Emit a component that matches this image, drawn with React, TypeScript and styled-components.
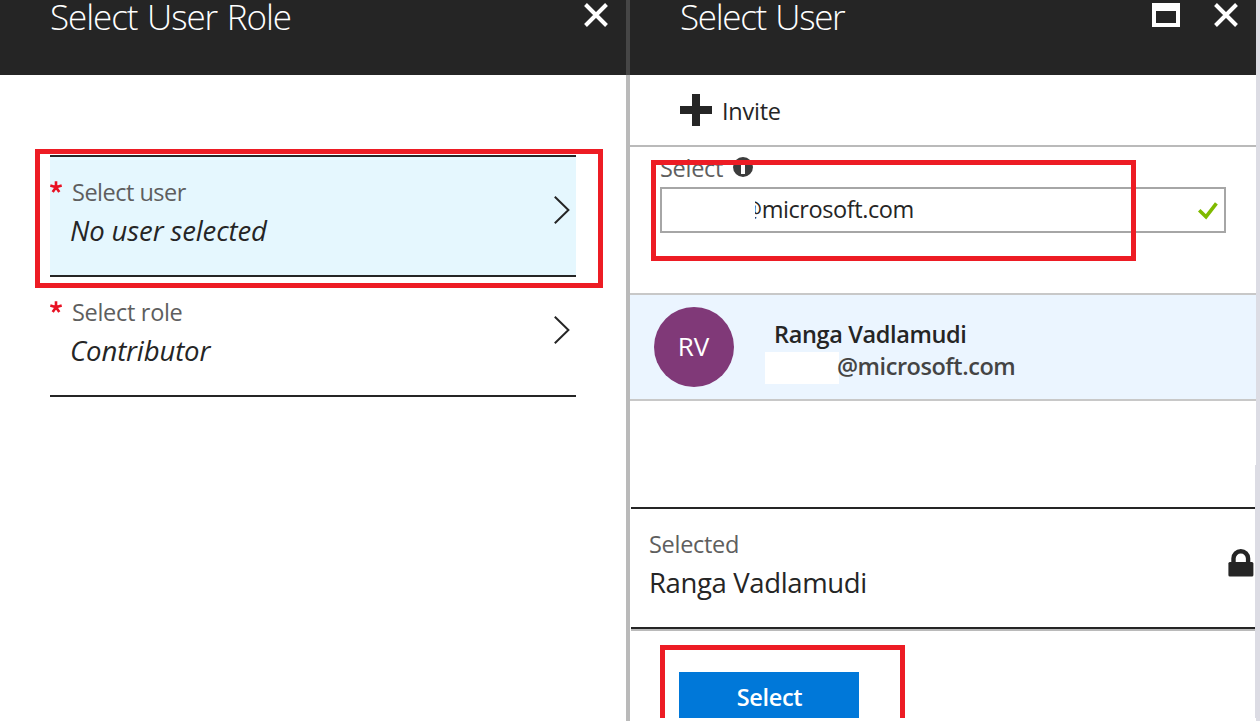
import React from 'react';
import styled, { createGlobalStyle } from 'styled-components';

const INK = '#252525';
const MARK = '#ed1c24';

const GlobalStyle = createGlobalStyle`
  * { box-sizing: border-box; }
  body {
    margin: 0;
    background: #fff;
    color: ${INK};
    font-family: "Open Sans", "Noto Sans", sans-serif;
  }
`;

const Page = styled.div`
  position: relative;
  display: flex;
  width: 1260px;
  height: 721px;
  overflow: hidden;
  background: #fff;
`;

const Blade = styled.section`
  display: flex;
  flex-direction: column;
  width: 626px;
  height: 718px;
  overflow: hidden;
`;

const Divider = styled.div`
  width: 4px;
  background: linear-gradient(#464646 75px, #bababa 75px);
`;

const Gutter = styled.div`
  width: 4px;
  background: #dcdce4;
`;

const Header = styled.header`
  display: flex;
  flex: none;
  height: 75px;
  padding-left: 50px;
  background: ${INK};
`;

const Title = styled.h1<{ $spacing: number }>`
  flex: 1;
  margin: 0;
  color: #fff;
  font-size: 35px;
  font-weight: 300;
  line-height: 33px;
  letter-spacing: ${p => p.$spacing}px;
  word-spacing: 1.5px;
  white-space: nowrap;
`;

const HeaderActions = styled.div`
  display: flex;
  align-items: flex-start;
  gap: 34px;
  padding: 3px 18px 0 0;
`;

const Icon = styled.svg`
  display: block;
  flex: none;
`;

const FieldList = styled.div`
  margin: 80px 50px 0;
  border-top: 2px solid ${INK};
`;

const Field = styled.div<{ $active?: boolean }>`
  display: flex;
  align-items: flex-start;
  height: 120px;
  padding-top: 19px;
  border-bottom: 2px solid ${INK};
  background: ${p => (p.$active ? '#e5f7fe' : 'transparent')};
`;

const Required = styled.div`
  width: 20px;
  padding-top: 5px;
`;

const FieldText = styled.div`
  flex: 1;
`;

const ChevronSlot = styled.div`
  padding: 20px 5px 0 0;
`;

const Label = styled.div<{ $indent?: number; $spacing?: number }>`
  padding-left: ${p => p.$indent ?? 0}px;
  color: #5e5e5e;
  font-size: 23.5px;
  line-height: 32px;
  letter-spacing: ${p => p.$spacing ?? -0.29}px;
  white-space: nowrap;
`;

const Value = styled.div<{ $italic?: boolean }>`
  margin-top: 4px;
  padding-left: ${p => (p.$italic ? 0 : 1)}px;
  font-size: 27.5px;
  font-style: ${p => (p.$italic ? 'italic' : 'normal')};
  line-height: 38px;
  letter-spacing: ${p => (p.$italic ? -0.12 : -0.36)}px;
  white-space: nowrap;
`;

const Toolbar = styled.div`
  display: flex;
  flex: none;
  align-items: center;
  gap: 10px;
  height: 72px;
  padding-left: 50px;
  border-bottom: 2px solid #bababa;
`;

const ToolbarLabel = styled.span`
  padding-top: 2px;
  font-size: 23.5px;
  line-height: 32px;
  letter-spacing: -0.25px;
`;

const Search = styled.div`
  flex: none;
  height: 146px;
  padding: 5px 30px 0;
`;

const SearchLabel = styled.div`
  display: flex;
  align-items: flex-start;
  gap: 10px;
  height: 35px;
`;

const InfoSlot = styled.div`
  padding-top: 5px;
`;

const Input = styled.div`
  display: flex;
  justify-content: space-between;
  height: 46px;
  padding: 4px 6px 0 93px;
  border: 2px solid #a6a6a6;
`;

const ClippedText = styled.div`
  overflow: hidden;
  height: 34px;
  font-size: 23.5px;
  line-height: 32px;
  letter-spacing: -0.42px;
  text-indent: -14px;
`;

const CheckSlot = styled.div`
  padding-top: 9px;
`;

const UserRow = styled.div`
  display: flex;
  flex: none;
  height: 108px;
  padding-left: 24px;
  border: solid #c8c8c8;
  border-width: 2px 0;
  background: #ebf5ff;
`;

const Avatar = styled.div`
  width: 80px;
  height: 80px;
  margin: 12px 40px 0 0;
  padding-right: 1px;
  border-radius: 50%;
  background: #803978;
  color: #fff;
  font-size: 26px;
  line-height: 78px;
  text-align: center;
`;

const UserText = styled.div`
  padding-top: 23px;
  font-size: 23.5px;
  font-weight: 600;
  line-height: 32px;
  white-space: nowrap;
`;

const UserName = styled.div`
  letter-spacing: -0.36px;
`;

const UserMail = styled.div`
  display: flex;
  color: #444;
  letter-spacing: -0.46px;
`;

const Redaction = styled.span`
  width: 74px;
  height: 32px;
  margin: 2px -2px 0 -9px;
  background: #fff;
`;

const Lower = styled.div`
  display: flex;
  flex-direction: column;
  flex: 1;
  margin-top: 64px;
  padding-left: 1px;
  border-right: 1px solid #dcdce4;
`;

const Selected = styled.div`
  display: flex;
  align-items: flex-start;
  justify-content: space-between;
  height: 124px;
  margin-top: 42px;
  padding: 19px 1px 0 17px;
  border-top: 2px solid ${INK};
  border-bottom: 2px solid #bababa;
  box-shadow: inset 0 -2px ${INK};
`;

const LockSlot = styled.div`
  padding-top: 21px;
`;

const Footer = styled.div`
  padding: 41px 0 0 48px;
`;

const SelectButton = styled.button`
  display: flex;
  align-items: flex-start;
  justify-content: center;
  width: 180px;
  height: 60px;
  padding: 9px 0 0 1px;
  border: 0;
  background: #0078d9;
  color: #fff;
  font: 600 23.5px/32px "Open Sans", "Noto Sans", sans-serif;
  letter-spacing: -0.3px;
`;

const Highlight = styled.div<{ $x: number; $y: number; $w: number; $h: number; $open?: boolean }>`
  position: absolute;
  left: ${p => p.$x}px;
  top: ${p => p.$y}px;
  width: ${p => p.$w}px;
  height: ${p => p.$h}px;
  border: 5px solid ${MARK};
  border-bottom-width: ${p => (p.$open ? 0 : 5)}px;
  pointer-events: none;
`;

const CloseIcon = () => (
  <Icon width="24" height="24" viewBox="0 0 24 24" fill="none" stroke="#fff" strokeWidth="4">
    <path d="M1.5 1.5l21 21M22.5 1.5l-21 21" />
  </Icon>
);

const MaximizeIcon = () => (
  <Icon width="28" height="24" viewBox="0 0 28 24">
    <path fill="#fff" fillRule="evenodd" d="M0 0h28v24H0zM4 8v12h20V8z" />
  </Icon>
);

const ChevronIcon = () => (
  <Icon width="17" height="28" viewBox="0 0 17 28" fill="none" stroke={INK} strokeWidth="2">
    <path d="M.8 .8L14.400 14L.8 27.200" />
  </Icon>
);

const RequiredIcon = () => (
  <Icon width="12" height="12" viewBox="0 0 12 12" fill="none" stroke="#e81123" strokeWidth="2.6">
    <path d="M6 6.2V.3M6 6.200L.3 4.500M6 6.200L11.700 4.500M6 6.200L2.700 11M6 6.200L9.300 11" />
  </Icon>
);

const PlusIcon = () => (
  <Icon width="32" height="32" viewBox="0 0 32 32" fill={INK}>
    <path d="M12 0h8v12h12v8H20v12h-8V20H0v-8h12z" />
  </Icon>
);

const InfoIcon = () => (
  <Icon width="20" height="20" viewBox="0 0 20 20">
    <circle cx="10" cy="10" r="10" fill="#3c3c3c" />
    <path fill="#fff" d="M8 3h4v3H8zM8 8h4v9H8z" />
  </Icon>
);

const CheckIcon = () => (
  <Icon width="20" height="18" viewBox="0 0 20 18" fill="none" stroke="#7fba00" strokeWidth="3.6">
    <path d="M1.200 8.200L8 14.800L18.400 1.400" />
  </Icon>
);

const LockIcon = () => (
  <Icon width="26" height="28" viewBox="0 0 26 28">
    <path d="M5.500 14V9.500a7.300 7.300 0 0 1 14.600 0V14" fill="none" stroke={INK} strokeWidth="4.4" />
    <rect x="0.4" y="13" width="25" height="14.6" rx="1.5" fill={INK} />
  </Icon>
);

interface FieldRowProps {
  label: string;
  value: string;
  spacing: number;
  active?: boolean;
}

const FieldRow = ({ label, value, spacing, active }: FieldRowProps) => (
  <Field $active={active}>
    <Required><RequiredIcon /></Required>
    <FieldText>
      <Label $indent={2} $spacing={spacing}>{label}</Label>
      <Value $italic>{value}</Value>
    </FieldText>
    <ChevronSlot><ChevronIcon /></ChevronSlot>
  </Field>
);

export default function App() {
  return (
    <>
      <GlobalStyle />
      <Page>
        <Blade>
          <Header>
            <Title $spacing={-1.05}>Select User Role</Title>
            <HeaderActions><CloseIcon /></HeaderActions>
          </Header>
          <FieldList>
            <FieldRow label="Select user" value="No user selected" spacing={-0.5} active />
            <FieldRow label="Select role" value="Contributor" spacing={-0.3} />
          </FieldList>
        </Blade>
        <Divider />
        <Blade>
          <Header>
            <Title $spacing={-1.3}>Select User</Title>
            <HeaderActions>
              <MaximizeIcon />
              <CloseIcon />
            </HeaderActions>
          </Header>
          <Toolbar>
            <PlusIcon />
            <ToolbarLabel>Invite</ToolbarLabel>
          </Toolbar>
          <Search>
            <SearchLabel>
              <Label>Select</Label>
              <InfoSlot><InfoIcon /></InfoSlot>
            </SearchLabel>
            <Input>
              <ClippedText>@microsoft.com</ClippedText>
              <CheckSlot><CheckIcon /></CheckSlot>
            </Input>
          </Search>
          <UserRow>
            <Avatar>RV</Avatar>
            <UserText>
              <UserName>Ranga Vadlamudi</UserName>
              <UserMail>
                <Redaction />
                <span>@microsoft.com</span>
              </UserMail>
            </UserText>
          </UserRow>
          <Lower>
            <Selected>
              <div>
                <Label $indent={1}>Selected</Label>
                <Value>Ranga Vadlamudi</Value>
              </div>
              <LockSlot><LockIcon /></LockSlot>
            </Selected>
            <Footer>
              <SelectButton>Select</SelectButton>
            </Footer>
          </Lower>
        </Blade>
        <Gutter />
        <Highlight $x={35} $y={149} $w={568} $h={139} />
        <Highlight $x={651} $y={160} $w={485} $h={101} />
        <Highlight $x={660} $y={645} $w={245} $h={73} $open />
      </Page>
    </>
  );
}
